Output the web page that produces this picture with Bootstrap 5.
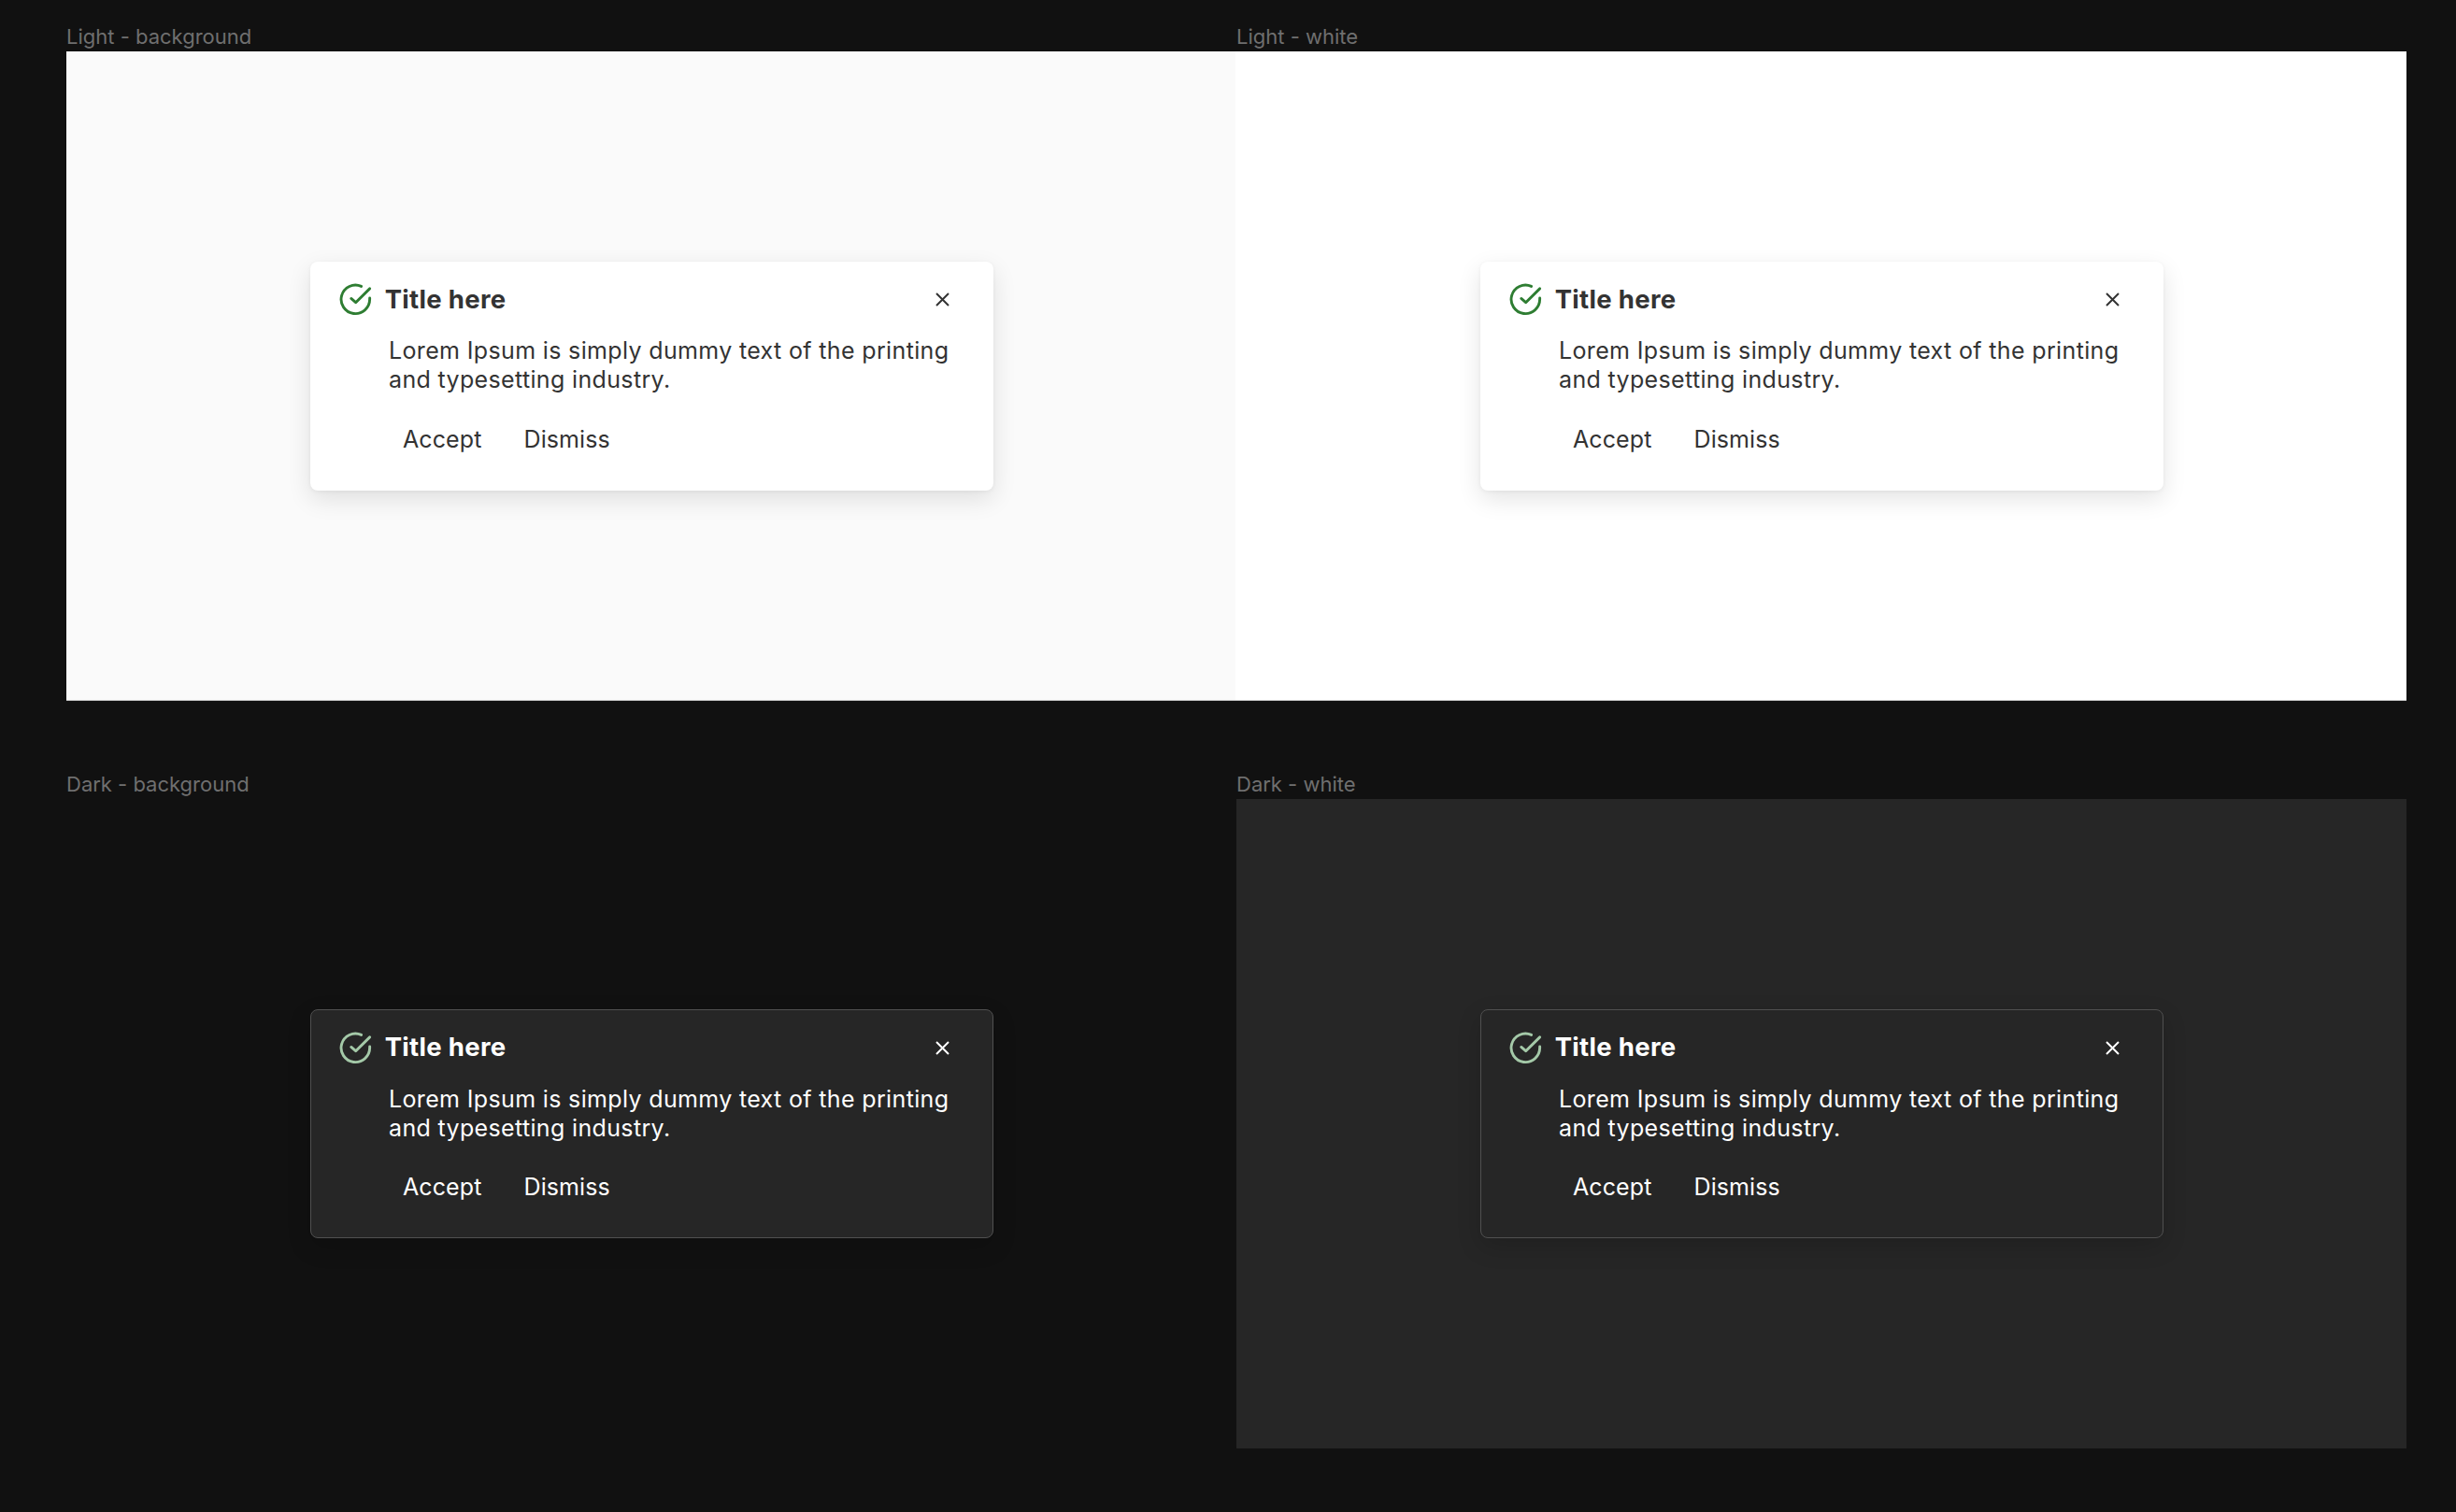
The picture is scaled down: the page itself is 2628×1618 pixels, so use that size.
<!DOCTYPE html>
<html lang="en">
<head>
  <meta charset="UTF-8" />
  <meta name="viewport" content="width=device-width, initial-scale=1" />
  <title>Notification variants</title>
  <link href="https://cdn.jsdelivr.net/npm/bootstrap@5.3.2/dist/css/bootstrap.min.css" rel="stylesheet">
  <style>
    body { background: #111; font-family: "Inter", sans-serif; }
    .sheet { padding: 19px 53px 0 71px; }
    .sheet-row + .sheet-row { margin-top: 69px; }
    .frame-label { height: 36px; padding-top: 7px; line-height: 27px; font-size: 22px; color: #6f6f6f; }
    .frame { height: 695px; }
    .frame-bg-light { background: #fafafa; border-bottom: 1px solid #c4c4c4; }
    .frame-white { background: #fff; border-bottom: 1px solid #c4c4c4; margin-left: -1px; padding-left: 1px; }
    .frame-bg-dark { background: #111; }
    .frame-grey { background: #262626; }

    .note {
      width: 731px;
      height: 245px;
      --bs-card-border-radius: 8px;
      --bs-card-border-width: 1.5px;
      --bs-card-border-color: transparent;
      --bs-card-bg: #fff;
      --note-ink: #333;
      --note-icon: #2e7d32;
      color: var(--note-ink);
      box-shadow: 0 9px 26px rgba(0, 0, 0, .11), 0 1px 4px rgba(0, 0, 0, .05);
    }
    .note-dark {
      --bs-card-border-color: #505050;
      --bs-card-bg: #262626;
      --note-ink: #fff;
      --note-icon: #a4c9a8;
      box-shadow: 0 9px 26px rgba(0, 0, 0, .16);
    }
    .note-head { height: 40px; margin-top: 20px; padding: 0 33px 0 29.5px; }
    .note-check { width: 36.7px; height: 36.7px; fill: none; stroke: var(--note-icon); stroke-width: 1.9; stroke-linecap: round; stroke-linejoin: round; }
    .note-title { font-size: 27.5px; line-height: 39px; padding-bottom: 1px; font-weight: 700; letter-spacing: .3px; margin: 0 0 0 13px; color: var(--note-ink); }
    .note-x { width: 40px; height: 40px; padding: 0; border: 0; background: none; color: var(--note-ink); }
    .note-x svg { width: 15px; height: 15px; stroke: currentColor; stroke-width: 2; }
    .note-text { font-size: 25px; line-height: 31px; letter-spacing: .35px; margin: 19.5px 0 0 83.5px; width: 625px; }
    .note-actions { margin: 23.5px 0 0 83.5px; gap: 15px; }
    .note-btn { --bs-btn-padding-x: 15px; --bs-btn-padding-y: 0; --bs-btn-font-size: 25px; --bs-btn-line-height: 48px; --bs-btn-border-width: 0; --bs-btn-color: var(--note-ink); --bs-btn-hover-color: var(--note-ink); letter-spacing: .1px; }
  </style>
</head>
<body>
  <div class="sheet">

    <div class="row g-0 sheet-row">
      <div class="col-6">
        <div class="frame-label">Light - background</div>
        <div class="frame frame-bg-light d-flex align-items-center justify-content-center">
          <div class="card note">
            <div class="note-head d-flex align-items-center">
              <svg class="note-check flex-shrink-0" viewBox="0 0 24 24"><path d="M22 11.08V12a10 10 0 1 1-5.93-9.14"/><polyline points="22 4.5 12.2 14.2 9 11.4"/></svg>
              <h5 class="note-title flex-grow-1">Title here</h5>
              <button type="button" class="note-x d-flex align-items-center justify-content-center" aria-label="Close"><svg viewBox="0 0 15 15"><path d="M1 1 14 14M14 1 1 14"/></svg></button>
            </div>
            <p class="note-text">Lorem Ipsum is simply dummy text of the printing and typesetting industry.</p>
            <div class="note-actions d-flex">
              <button type="button" class="btn note-btn">Accept</button>
              <button type="button" class="btn note-btn">Dismiss</button>
            </div>
          </div>
        </div>
      </div>
      <div class="col-6">
        <div class="frame-label">Light - white</div>
        <div class="frame frame-white d-flex align-items-center justify-content-center">
          <div class="card note">
            <div class="note-head d-flex align-items-center">
              <svg class="note-check flex-shrink-0" viewBox="0 0 24 24"><path d="M22 11.08V12a10 10 0 1 1-5.93-9.14"/><polyline points="22 4.5 12.2 14.2 9 11.4"/></svg>
              <h5 class="note-title flex-grow-1">Title here</h5>
              <button type="button" class="note-x d-flex align-items-center justify-content-center" aria-label="Close"><svg viewBox="0 0 15 15"><path d="M1 1 14 14M14 1 1 14"/></svg></button>
            </div>
            <p class="note-text">Lorem Ipsum is simply dummy text of the printing and typesetting industry.</p>
            <div class="note-actions d-flex">
              <button type="button" class="btn note-btn">Accept</button>
              <button type="button" class="btn note-btn">Dismiss</button>
            </div>
          </div>
        </div>
      </div>
    </div>

    <div class="row g-0 sheet-row">
      <div class="col-6">
        <div class="frame-label">Dark - background</div>
        <div class="frame frame-bg-dark d-flex align-items-center justify-content-center">
          <div class="card note note-dark">
            <div class="note-head d-flex align-items-center">
              <svg class="note-check flex-shrink-0" viewBox="0 0 24 24"><path d="M22 11.08V12a10 10 0 1 1-5.93-9.14"/><polyline points="22 4.5 12.2 14.2 9 11.4"/></svg>
              <h5 class="note-title flex-grow-1">Title here</h5>
              <button type="button" class="note-x d-flex align-items-center justify-content-center" aria-label="Close"><svg viewBox="0 0 15 15"><path d="M1 1 14 14M14 1 1 14"/></svg></button>
            </div>
            <p class="note-text">Lorem Ipsum is simply dummy text of the printing and typesetting industry.</p>
            <div class="note-actions d-flex">
              <button type="button" class="btn note-btn">Accept</button>
              <button type="button" class="btn note-btn">Dismiss</button>
            </div>
          </div>
        </div>
      </div>
      <div class="col-6">
        <div class="frame-label">Dark - white</div>
        <div class="frame frame-grey d-flex align-items-center justify-content-center">
          <div class="card note note-dark">
            <div class="note-head d-flex align-items-center">
              <svg class="note-check flex-shrink-0" viewBox="0 0 24 24"><path d="M22 11.08V12a10 10 0 1 1-5.93-9.14"/><polyline points="22 4.5 12.2 14.2 9 11.4"/></svg>
              <h5 class="note-title flex-grow-1">Title here</h5>
              <button type="button" class="note-x d-flex align-items-center justify-content-center" aria-label="Close"><svg viewBox="0 0 15 15"><path d="M1 1 14 14M14 1 1 14"/></svg></button>
            </div>
            <p class="note-text">Lorem Ipsum is simply dummy text of the printing and typesetting industry.</p>
            <div class="note-actions d-flex">
              <button type="button" class="btn note-btn">Accept</button>
              <button type="button" class="btn note-btn">Dismiss</button>
            </div>
          </div>
        </div>
      </div>
    </div>

  </div>
  <script src="https://cdn.jsdelivr.net/npm/bootstrap@5.3.2/dist/js/bootstrap.bundle.min.js"></script>
</body>
</html>
